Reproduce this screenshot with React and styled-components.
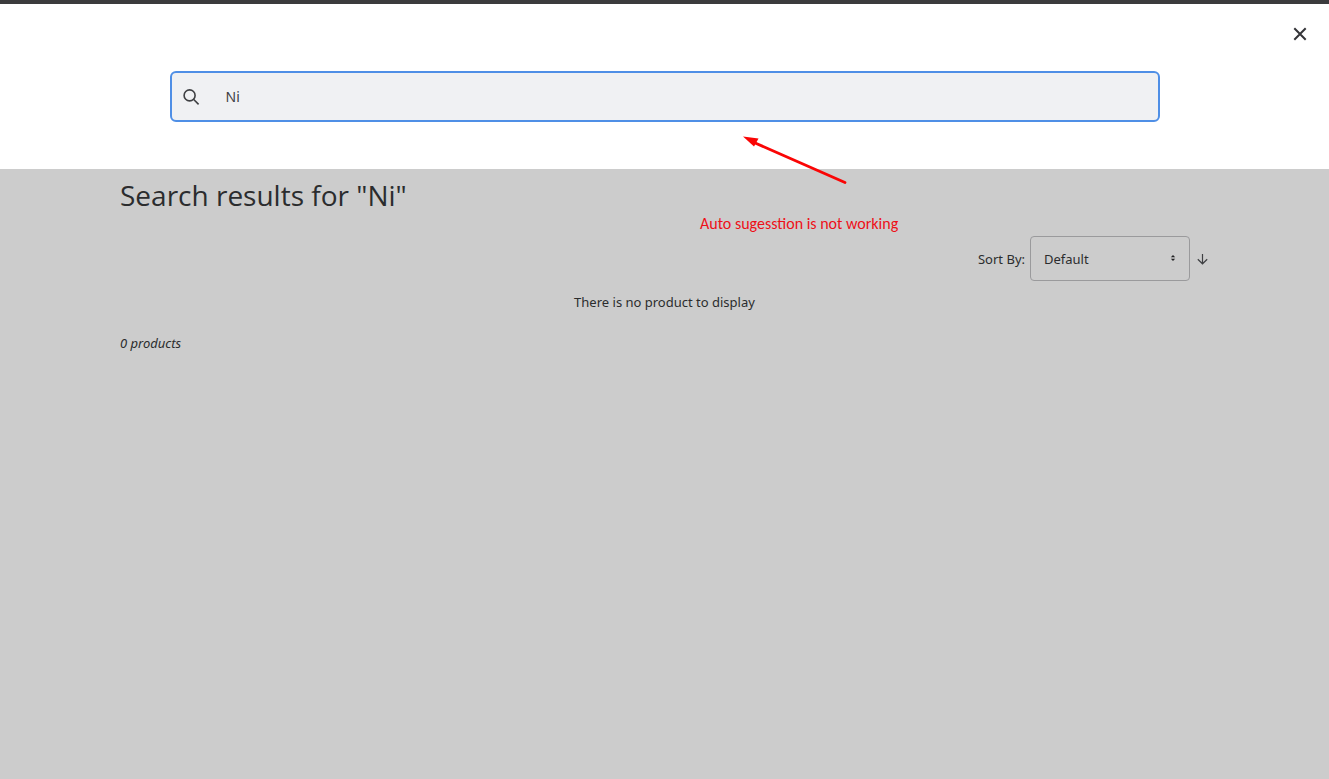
import React, { useState } from "react";
import styled, { createGlobalStyle } from "styled-components";

const GlobalStyle = createGlobalStyle`
  *, *::before, *::after { box-sizing: border-box; }
  body {
    margin: 0;
    background: #cccccc;
    color: #2b2c2e;
    font: 14px/20px "Segoe UI", "Noto Sans", sans-serif;
  }
`;

const Page = styled.div`
  position: relative;
  min-height: 100vh;
`;

const SearchPanel = styled.header`
  display: flex;
  flex-direction: column;
  padding: 16px 12px 47px;
  border-top: 4px solid #3b3b3d;
  background: #ffffff;
`;

const CloseButton = styled.button`
  display: flex;
  align-items: center;
  justify-content: center;
  align-self: flex-end;
  width: 34px;
  height: 28px;
  padding: 0;
  border: 0;
  background: transparent;
  color: #343438;
  cursor: pointer;
`;

const SearchForm = styled.form`
  display: flex;
  align-items: center;
  gap: 26px;
  width: 76%;
  max-width: 990px;
  height: 51px;
  margin: 23px auto 0;
  padding: 0 10px;
  border: 2px solid #4f8fe6;
  border-radius: 6px;
  background: #f0f1f3;
`;

const IconButton = styled.button`
  display: flex;
  flex: none;
  padding: 0;
  border: 0;
  background: transparent;
  color: #3f4043;
  cursor: pointer;
`;

const SearchInput = styled.input`
  flex: 1;
  min-width: 0;
  padding: 0;
  border: 0;
  outline: 0;
  background: transparent;
  color: #3f4043;
  font: inherit;
`;

const Results = styled.main`
  display: flex;
  flex-direction: column;
  padding: 8px 120px;
`;

const Title = styled.h1`
  margin: 0;
  font-family: "Segoe UI", "Open Sans", sans-serif;
  font-size: 28px;
  font-weight: 400;
  line-height: 36px;
`;

const SortBar = styled.div`
  display: flex;
  align-items: center;
  justify-content: flex-end;
  gap: 5px;
  margin-top: 23px;
`;

const SortLabel = styled.label`
  font-size: 13px;
`;

const SelectWrap = styled.div`
  position: relative;
  width: 160px;
`;

const Select = styled.select`
  appearance: none;
  width: 100%;
  height: 45px;
  padding: 0 28px 0 13px;
  border: 1px solid #9a9a9c;
  border-radius: 4px;
  background: transparent;
  color: inherit;
  font: inherit;
  font-size: 13px;
`;

const SelectArrows = styled.svg`
  position: absolute;
  top: 18px;
  right: 14px;
  pointer-events: none;
`;

const Message = styled.p`
  margin: 11px 0 0;
  font-size: 13px;
  text-align: center;
`;

const Count = styled.p`
  margin: 21px 0 0;
  font-size: 13px;
  font-style: italic;
`;

const Note = styled.aside`
  position: absolute;
  top: 133px;
  left: 700px;
  color: #ee1018;
  font: 16px/20px Calibri, Carlito, Lato, sans-serif;
  white-space: nowrap;
  pointer-events: none;
`;

const NoteArrow = styled.svg`
  display: block;
  margin: 0 0 25px 40px;
`;

export default function App() {
  const [query, setQuery] = useState("Ni");
  return (
    <Page>
      <GlobalStyle />
      <SearchPanel>
        <CloseButton type="button" aria-label="Close search">
          <svg width="14" height="14" viewBox="0 0 14 14" fill="none" stroke="currentColor" strokeWidth="2">
            <path d="M1.3 1.3 12.7 12.7M12.7 1.3 1.3 12.7" />
          </svg>
        </CloseButton>
        <SearchForm role="search" onSubmit={(e) => e.preventDefault()}>
          <IconButton type="submit" aria-label="Search">
            <svg width="18" height="18" viewBox="0 0 18 18" fill="none" stroke="currentColor" strokeWidth="1.6">
              <circle cx="7.6" cy="7.4" r="5.5" />
              <path d="m11.5 11.3 5.1 5.1" />
            </svg>
          </IconButton>
          <SearchInput
            type="text"
            aria-label="Search products"
            value={query}
            onChange={(e) => setQuery(e.target.value)}
          />
        </SearchForm>
      </SearchPanel>

      <Results>
        <Title>Search results for "Ni"</Title>
        <SortBar>
          <SortLabel htmlFor="sort">Sort By:</SortLabel>
          <SelectWrap>
            <Select id="sort" defaultValue="default">
              <option value="default">Default</option>
            </Select>
            <SelectArrows width="6" height="8" viewBox="0 0 6 8" fill="#222224">
              <path d="M3 1 5.2 3.3H.8ZM3 7 .8 4.7h4.4Z" />
            </SelectArrows>
          </SelectWrap>
          <IconButton type="button" aria-label="Sort descending">
            <svg width="14" height="14" viewBox="0 0 14 14" fill="none" stroke="currentColor" strokeWidth="1.2">
              <path d="M7.5 2v9.6M2.8 7.2l4.7 4.6 4.7-4.6" />
            </svg>
          </IconButton>
        </SortBar>
        <Message>There is no product to display</Message>
        <Count>0 products</Count>
      </Results>

      <Note>
        <NoteArrow width="110" height="56" viewBox="0 0 110 56" aria-hidden="true">
          <path d="M14 9.5 105 49.5" stroke="#fa0505" strokeWidth="2.8" strokeLinecap="round" />
          <path d="m3 3.5 15.5 2-4.5 8Z" fill="#fa0505" />
        </NoteArrow>
        Auto sugesstion is not working
      </Note>
    </Page>
  );
}
